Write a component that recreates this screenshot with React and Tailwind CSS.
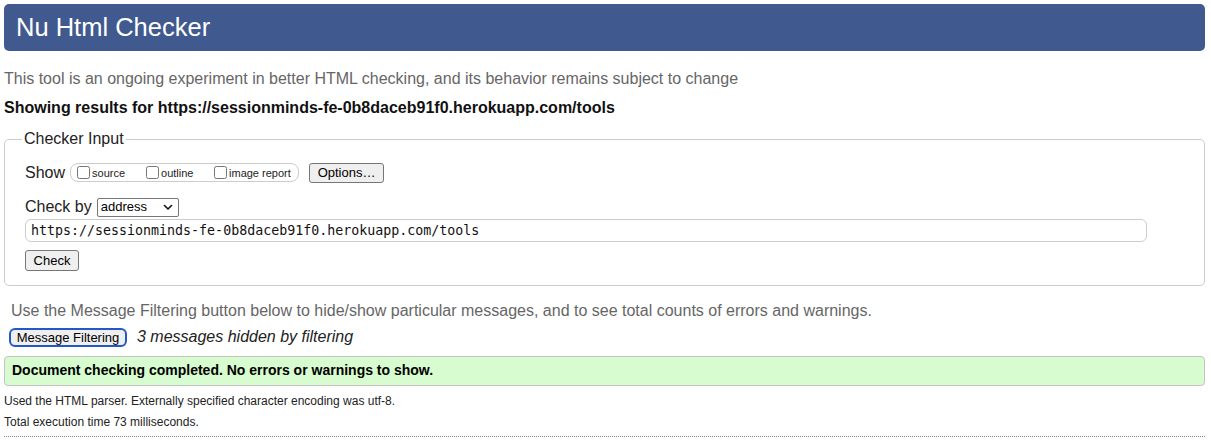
import React from "react";

function Check({ label, className = "" }) {
  return (
    <label className={"flex items-center " + className}>
      <input type="checkbox" className="m-0 w-[13px] h-[13px]" />
      <span className="ml-[2px] mt-[2px] text-[11px] text-[#222]">{label}</span>
    </label>
  );
}

export default function App() {
  return (
    <div className="w-[1211px] h-[447px] bg-white pl-[4px] pr-[6px] pt-[4px] font-['Liberation_Sans',Arial,sans-serif] text-[#222]">
      <h1 className="h-[47px] rounded-[5px] bg-[#405a8f] text-white text-[25.5px] leading-[47px] pl-[12px]">
        Nu Html Checker
      </h1>

      <p className="mt-[19px] h-[18px] leading-[18px] text-[16px] text-[#666]">
        This tool is an ongoing experiment in better HTML checking, and its behavior remains subject to change
      </p>
      <p className="mt-[11px] h-[18px] leading-[18px] text-[16px] font-bold text-[#111]">
        Showing results for https://sessionminds-fe-0b8daceb91f0.herokuapp.com/tools
      </p>

      <fieldset className="mt-[13px] border border-[#ccc] rounded-[5px] px-[20px] pb-[13px]">
        <legend className="ml-[-3px] px-[2px] text-[16px] leading-[18px] text-[#222]">Checker Input</legend>

        <div className="mt-[14px] flex items-center h-[21px]">
          <span className="text-[16px] leading-[18px]">Show</span>
          <div className="ml-[5px] h-[19px] w-[229px] border border-[#ccc] rounded-[8px] flex items-center pl-[6px]">
            <Check label="source" className="w-[69px]" />
            <Check label="outline" className="w-[68px]" />
            <Check label="image report" />
          </div>
          <button className="ml-[10px] h-[20px] w-[75px] bg-[#efefef] border border-[#767676] rounded-[3px] text-[13px] leading-[18px] text-black">
            Options…
          </button>
        </div>

        <div className="mt-[14px] flex items-center h-[20px]">
          <span className="text-[16px] leading-[18px]">Check by</span>
          <div className="ml-[5px] h-[19px] w-[82px] border border-[#767676] rounded-[2px] flex items-center justify-between pl-[3px] pr-[5px] bg-white">
            <span className="text-[13px] leading-[16px] text-black">address</span>
            <svg width="10" height="7" viewBox="0 0 10 7">
              <path d="M1.5 1.5 L5 5 L8.5 1.5" fill="none" stroke="#111" strokeWidth="1.6" strokeLinecap="round" strokeLinejoin="round" />
            </svg>
          </div>
        </div>

        <div className="mt-[2px] h-[23px] w-[1122px] border border-[#ccc] rounded-[6px] flex items-center pl-[5px]">
          <span className="font-['DejaVu_Sans_Mono',monospace] text-[13.3px] leading-[16px] text-[#111]">
            https://sessionminds-fe-0b8daceb91f0.herokuapp.com/tools
          </span>
        </div>

        <button className="mt-[8px] h-[21px] w-[54px] bg-[#efefef] border border-[#767676] rounded-[3px] text-[13px] leading-[18px] text-black">
          Check
        </button>
      </fieldset>

      <p className="mt-[16px] ml-[7px] h-[18px] leading-[18px] text-[16px] text-[#666]">
        Use the Message Filtering button below to hide/show particular messages, and to see total counts of errors and warnings.
      </p>

      <div className="mt-[8px] ml-[5px] flex items-center h-[19px]">
        <button className="h-[19px] w-[118px] bg-[#efefef] border-2 border-[#2458c8] rounded-[6px] text-[13px] leading-[15px] text-black">
          Message Filtering
        </button>
        <span className="ml-[10px] text-[16px] italic leading-[18px] text-[#222]">3 messages hidden by filtering</span>
      </div>

      <div className="mt-[9px] h-[30px] bg-[#d6fccf] border border-[#c4c4c4] rounded-[4px] flex items-center pl-[7px]">
        <span className="text-[14px] font-bold text-black">Document checking completed. No errors or warnings to show.</span>
      </div>

      <p className="mt-[8px] h-[14px] leading-[14px] text-[12px] text-[#222]">
        Used the HTML parser. Externally specified character encoding was utf-8.
      </p>
      <p className="mt-[7px] h-[14px] leading-[14px] text-[12px] text-[#222]">
        Total execution time 73 milliseconds.
      </p>
      <div className="mt-[7px] border-b border-dotted border-[#888]" />
    </div>
  );
}
